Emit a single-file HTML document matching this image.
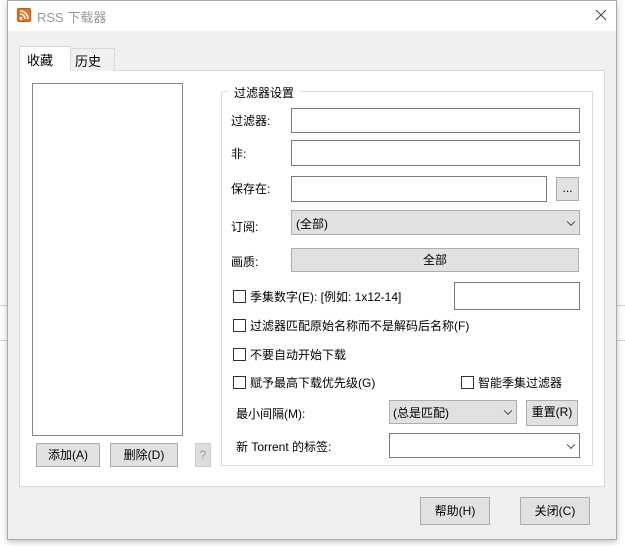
<!DOCTYPE html><html><head><style>
*{box-sizing:border-box;margin:0;padding:0}
body{width:625px;height:547px;background:#fff;position:relative;overflow:hidden;font-family:"Liberation Sans","Noto Sans CJK SC",sans-serif;font-size:12px;color:#000}
.a{position:absolute}
.win{left:7px;top:0;width:610px;height:540px;background:#f0f0f0;border:1px solid #aaa;box-shadow:0 2px 6px rgba(0,0,0,.25)}
.inp{background:#fff;border:1px solid #7a7a7a}
.btn{background:#e1e1e1;border:1px solid #adadad;text-align:center}
.cb{width:13px;height:13px;border:1px solid #333;background:#fff}
.t{white-space:nowrap}
.chev{position:absolute;right:5px;top:50%;width:6px;height:6px;border-right:1px solid #444;border-bottom:1px solid #444;transform:translateY(-70%) rotate(45deg)}
</style></head><body>
<div class="a" style="left:0;top:305px;width:7px;height:1px;background:#ccc"></div>
<div class="a" style="left:0;top:340px;width:7px;height:1px;background:#ccc"></div>
<div class="a" style="left:617px;top:305px;width:8px;height:1px;background:#ccc"></div>
<div class="a" style="left:617px;top:340px;width:8px;height:1px;background:#ccc"></div>
<div class="a win"></div>
<div class="a" style="left:8px;top:1px;width:608px;height:30px;background:#fff"></div>
<div class="a" style="left:17px;top:8px;width:14px;height:14px;background:#e8711e;border-radius:2px;border:1px solid #c45a10"></div>
<svg class="a" style="left:17px;top:8px" width="14" height="14"><circle cx="4" cy="10.5" r="1.5" fill="#fff"/><path d="M3 6a5 5 0 0 1 5 5M3 3a8 8 0 0 1 8 8" stroke="#fff" stroke-width="1.6" fill="none"/></svg>
<div class="a t" style="left:37px;top:7px;font-size:13px;color:#999">RSS 下载器</div>
<svg class="a" style="left:595px;top:9px" width="12" height="12"><path d="M1 1L11 11M11 1L1 11" stroke="#444" stroke-width="1"/></svg>
<div class="a" style="left:19px;top:70px;width:586px;height:417px;background:#fff;border:1px solid #d9d9d9"></div>
<div class="a" style="left:70px;top:48px;width:45px;height:23px;background:#f0f0f0;border:1px solid #d9d9d9;border-bottom:none"></div>
<div class="a t" style="left:75px;top:51px;font-size:13px">历史</div>
<div class="a" style="left:19px;top:46px;width:52px;height:25px;background:#fff;border:1px solid #d9d9d9;border-bottom:none"></div>
<div class="a t" style="left:27px;top:50px;font-size:13px">收藏</div>
<div class="a" style="left:32px;top:83px;width:151px;height:353px;background:#fff;border:1px solid #828790"></div>
<div class="a" style="left:221px;top:91px;width:372px;height:375px;border:1px solid #dcdcdc"></div>
<div class="a t" style="left:229px;top:84px;background:#fff;padding:0 5px;font-size:12px">过滤器设置</div>
<div class="a t" style="left:231px;top:112px">过滤器:</div>
<div class="a inp" style="left:291px;top:108px;width:289px;height:25px"></div>
<div class="a t" style="left:231px;top:145px">非:</div>
<div class="a inp" style="left:291px;top:140px;width:289px;height:26px"></div>
<div class="a t" style="left:231px;top:180px">保存在:</div>
<div class="a inp" style="left:291px;top:176px;width:256px;height:26px"></div>
<div class="a btn" style="left:556px;top:177px;width:23px;height:24px;line-height:20px">...</div>
<div class="a t" style="left:231px;top:218px">订阅:</div>
<div class="a btn" style="left:291px;top:210px;width:289px;height:25px;text-align:left;padding:4px 4px">(全部)<span class="chev"></span></div>
<div class="a t" style="left:231px;top:253px">画质:</div>
<div class="a btn" style="left:291px;top:248px;width:288px;height:24px;line-height:22px">全部</div>
<div class="a cb" style="left:233px;top:290px"></div>
<div class="a t" style="left:250px;top:288px">季集数字(E): [例如: 1x12-14]</div>
<div class="a inp" style="left:454px;top:282px;width:126px;height:28px"></div>
<div class="a cb" style="left:233px;top:319px"></div>
<div class="a t" style="left:250px;top:317px">过滤器匹配原始名称而不是解码后名称(F)</div>
<div class="a cb" style="left:233px;top:348px"></div>
<div class="a t" style="left:250px;top:346px">不要自动开始下载</div>
<div class="a cb" style="left:233px;top:376px"></div>
<div class="a t" style="left:250px;top:374px">赋予最高下载优先级(G)</div>
<div class="a cb" style="left:461px;top:376px"></div>
<div class="a t" style="left:478px;top:374px">智能季集过滤器</div>
<div class="a t" style="left:236px;top:405px">最小间隔(M):</div>
<div class="a btn" style="left:389px;top:400px;width:128px;height:24px;text-align:left;padding:3px 3px">(总是匹配)<span class="chev"></span></div>
<div class="a btn" style="left:526px;top:400px;width:52px;height:26px;line-height:23px">重置(R)</div>
<div class="a t" style="left:236px;top:438px">新 Torrent 的标签:</div>
<div class="a inp" style="left:389px;top:433px;width:191px;height:25px"><span class="chev"></span></div>
<div class="a btn" style="left:36px;top:443px;width:64px;height:24px;line-height:22px">添加(A)</div>
<div class="a btn" style="left:110px;top:443px;width:68px;height:24px;line-height:22px">删除(D)</div>
<div class="a btn" style="left:195px;top:443px;width:16px;height:24px;line-height:22px;color:#999;background:#ddd;border-color:#ccc">?</div>
<div class="a btn" style="left:420px;top:497px;width:70px;height:28px;line-height:26px">帮助(H)</div>
<div class="a btn" style="left:520px;top:497px;width:70px;height:28px;line-height:26px">关闭(C)</div>
</body></html>
